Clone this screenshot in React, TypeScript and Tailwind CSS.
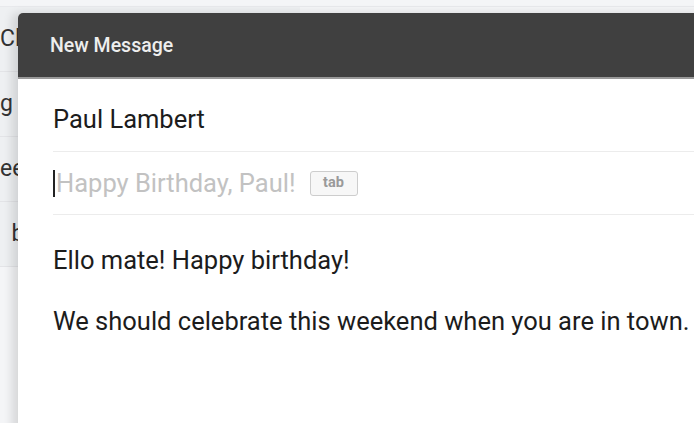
import React from "react";

export default function App() {
  const rows = ["Clay", "g to", "eek", "\u00a0 bo"];
  return (
    <div
      className="relative w-[694px] h-[423px] overflow-hidden bg-[#f4f5f7]"
      style={{ fontFamily: "Roboto, 'Noto Sans', sans-serif" }}
    >
      <div className="h-[7px] border-b border-[#e8e9ec]" />
      {/* background list */}
      <div className="w-[300px] flex flex-col">
        {rows.map((r, i) => (
          <div
            key={i}
            className="h-[65px] flex items-center border-b border-[#e3e4e7] bg-[#eef0f2] text-[23px] text-[#333] pl-[0px] whitespace-nowrap"
          >
            {r}
          </div>
        ))}
      </div>

      {/* modal */}
      <div className="absolute left-[18px] top-[13px] w-[720px] h-[440px] bg-white rounded-tl-[5px] shadow-[-6px_0_10px_rgba(0,0,0,0.12)] flex flex-col">
        <div className="h-[66px] shrink-0 bg-[#404040] rounded-tl-[5px] flex items-center pl-[32px] pt-[2px] text-[#eeeeee] text-[19.5px] font-medium border-b-2 border-[#999]">
          New Message
        </div>
        <div className="pl-[35px] flex flex-col">
          <div className="h-[73px] flex items-center border-b border-[#ececec] text-[25.5px] text-[#1c1c1c] pt-[8px]">
            Paul Lambert
          </div>
          <div className="h-[63px] flex items-center border-b border-[#ececec] text-[25.5px]">
            <span className="w-[2px] h-[27px] bg-[#222] mr-[1px]" />
            <span className="text-[#c2c2c2]">Happy Birthday, Paul!</span>
            <span className="ml-[14px] h-[25px] w-[48px] justify-center flex items-center border border-[#cdcdcd] rounded-[3px] bg-[#f7f7f7] text-[14.5px] font-bold text-[#9a9a9a]">
              tab
            </span>
          </div>
          <div className="pt-[30px] text-[25.5px] text-[#1c1c1c] leading-[30px] flex flex-col gap-[31px] whitespace-nowrap">
            <div>Ello mate! Happy birthday!</div>
            <div>We should celebrate this weekend when you are in town.</div>
          </div>
        </div>
      </div>
    </div>
  );
}
